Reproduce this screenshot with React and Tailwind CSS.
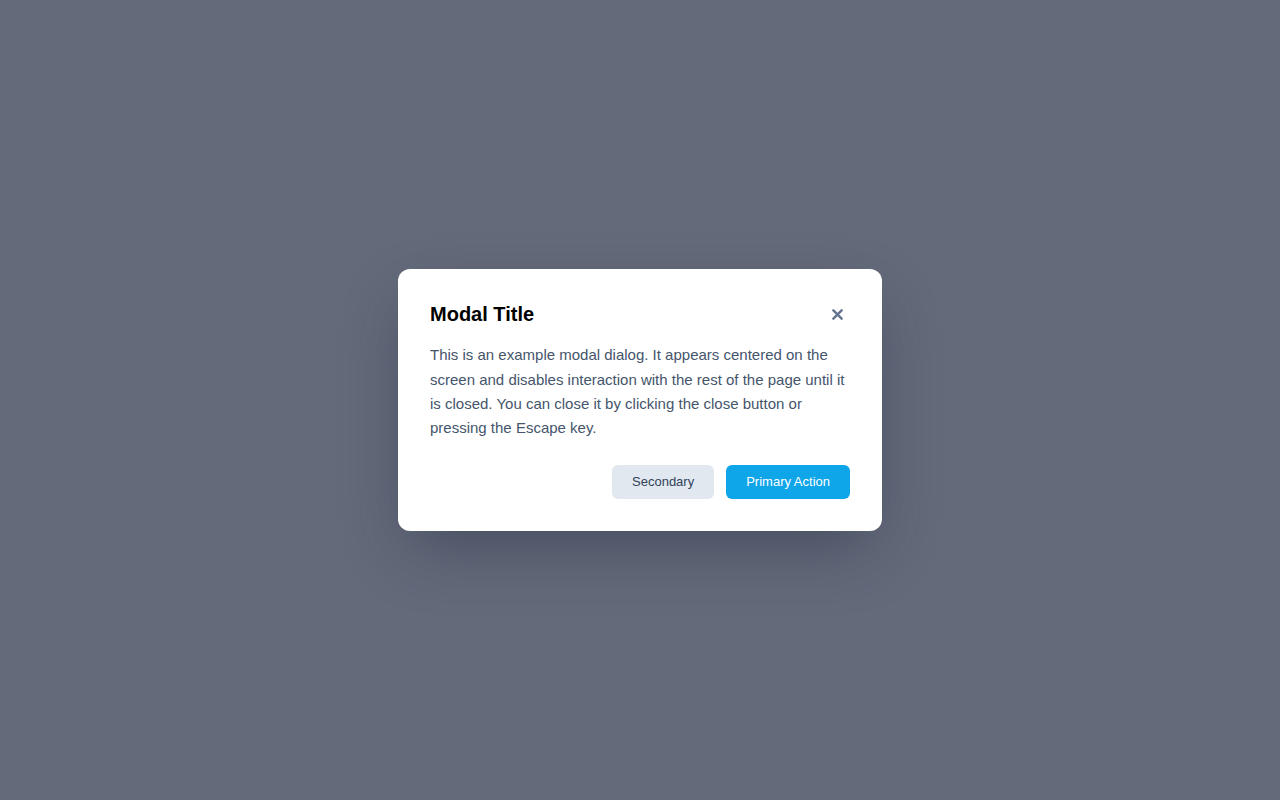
import React from "react";

export default function App() {
  return (
    <div
      className="w-full h-[800px] bg-[#646a7a] flex items-center justify-center"
      style={{ fontFamily: '"Liberation Sans", Arial, sans-serif' }}
    >
      <div className="w-[484px] bg-white rounded-xl p-8 shadow-[0_25px_60px_-12px_rgba(30,41,59,0.45)]">
        <div className="flex items-center justify-between">
          <h2 className="text-[20px] leading-[26px] font-bold text-black">Modal Title</h2>
          <button className="w-[26px] h-6 flex items-center justify-center text-slate-500">
            <svg width="11" height="11" viewBox="0 0 12 12" fill="none">
              <path d="M1.5 1.5L10.5 10.5M10.5 1.5L1.5 10.5" stroke="currentColor" strokeWidth="2.6" strokeLinecap="round" />
            </svg>
          </button>
        </div>
        <p className="mt-[16px] text-[15px] leading-[24.4px] text-slate-600">
          This is an example modal dialog. It appears centered on the screen and disables interaction with the rest of the page until it is closed. You can close it by clicking the close button or pressing the Escape key.
        </p>
        <div className="mt-6 flex justify-end gap-3">
          <button className="h-[34px] px-5 rounded-md bg-[#e2e8f0] text-slate-700 text-[13px]">Secondary</button>
          <button className="h-[34px] px-5 rounded-md bg-[#0ea5e9] text-white text-[13px] font-medium">Primary Action</button>
        </div>
      </div>
    </div>
  );
}
